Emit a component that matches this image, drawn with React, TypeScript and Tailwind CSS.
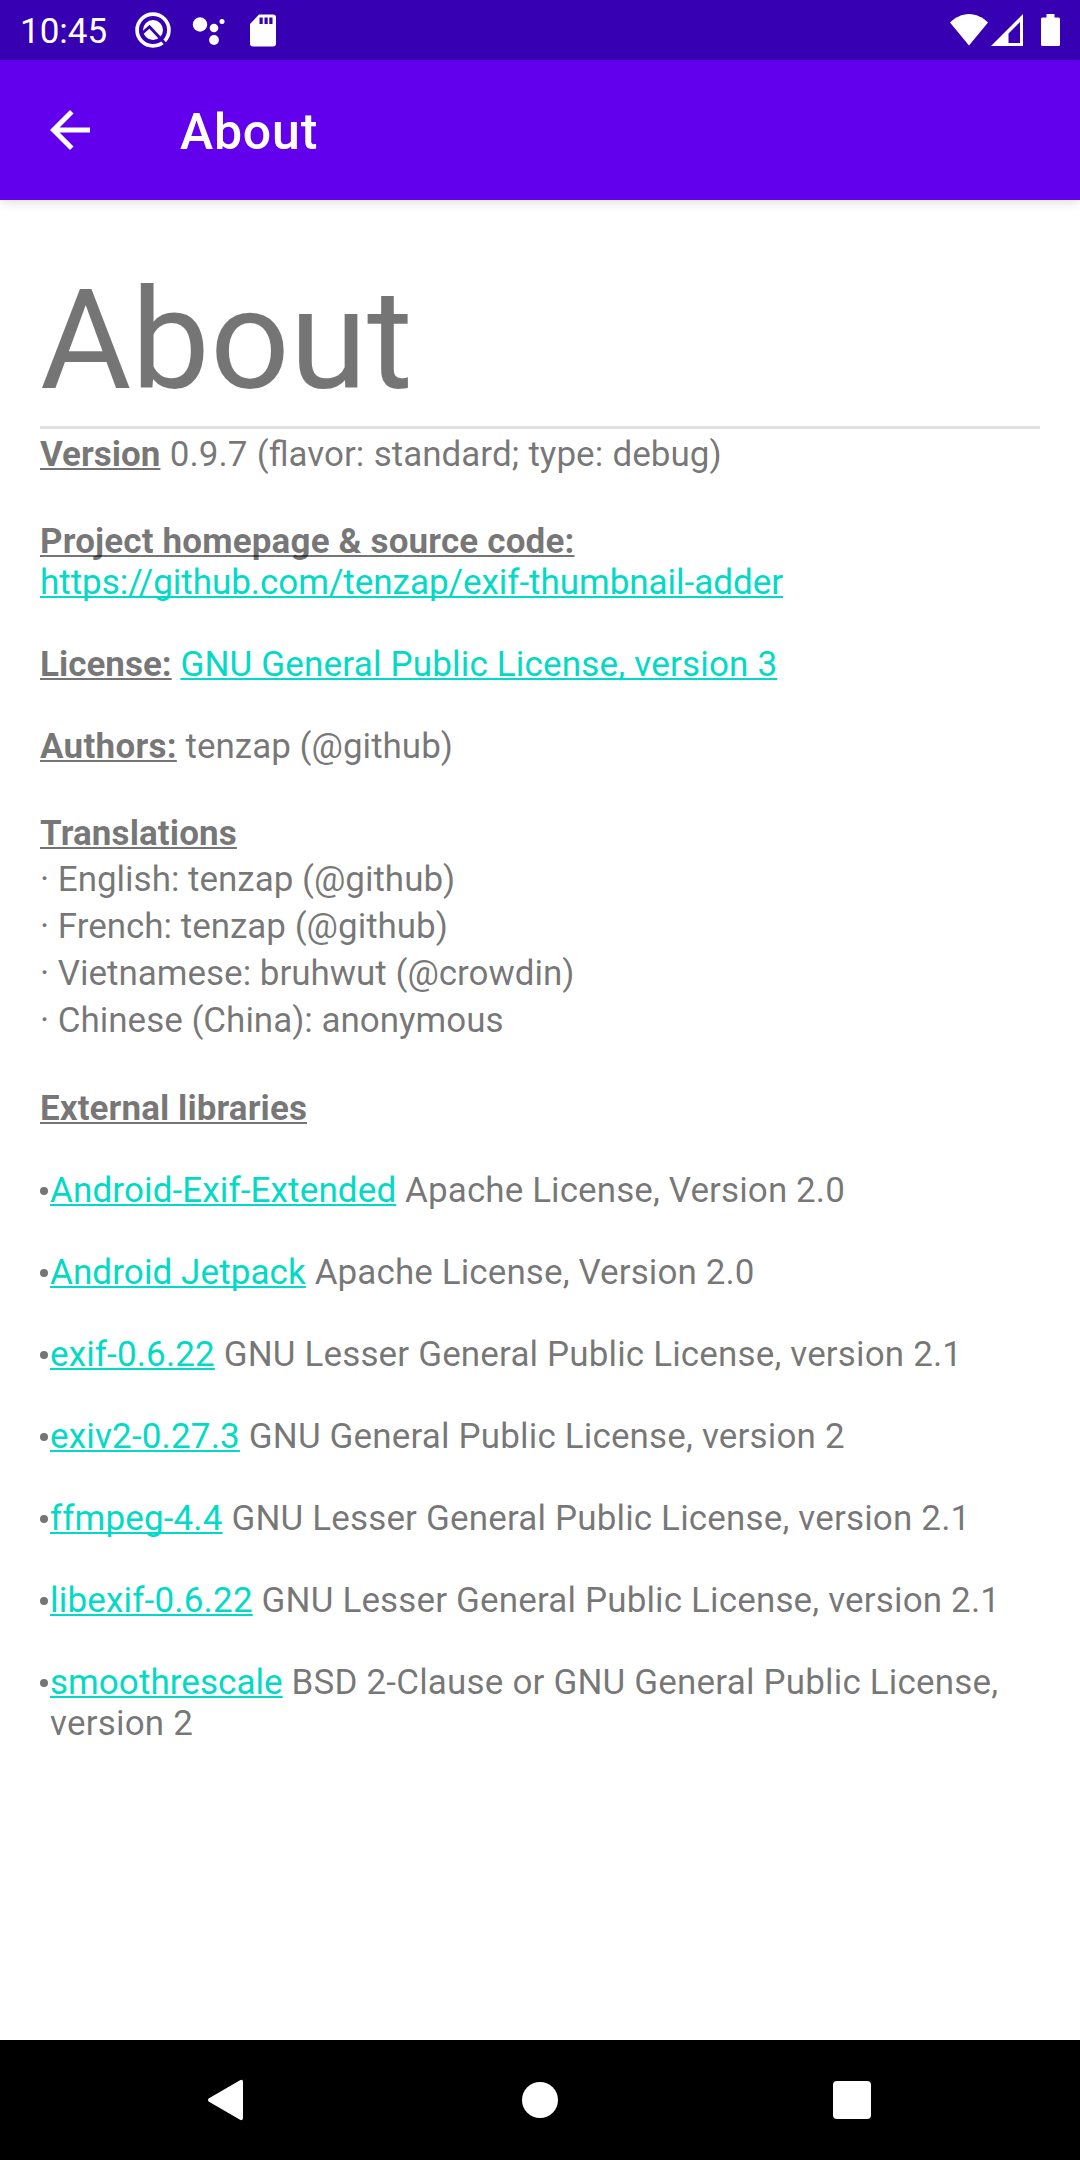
import React from "react";

const LIBRARIES = [
  { name: "Android-Exif-Extended", license: "Apache License, Version 2.0", nameTracking: "tracking-[0.13px]", tracking: "tracking-[0.1px]" },
  { name: "Android Jetpack", license: "Apache License, Version 2.0", nameTracking: "tracking-[0.1px]", tracking: "tracking-[0.1px]" },
  { name: "exif-0.6.22", license: "GNU Lesser General Public License, version 2.1", nameTracking: "tracking-[0.13px]", tracking: "tracking-[0.15px]" },
  { name: "exiv2-0.27.3", license: "GNU General Public License, version 2", nameTracking: "tracking-[0.17px]", tracking: "tracking-[0.16px]" },
  { name: "ffmpeg-4.4", license: "GNU Lesser General Public License, version 2.1", nameTracking: "tracking-[0.14px]", tracking: "tracking-[0.16px]" },
  { name: "libexif-0.6.22", license: "GNU Lesser General Public License, version 2.1", nameTracking: "tracking-[0.19px]", tracking: "tracking-[0.15px]" },
  { name: "smoothrescale", license: "BSD 2-Clause or GNU General Public License, version 2", nameTracking: "tracking-[0.05px]", tracking: "tracking-[0.18px]" },
];

const TRANSLATIONS = [
  "English: tenzap (@github)",
  "French: tenzap (@github)",
  "Vietnamese: bruhwut (@crowdin)",
  "Chinese (China): anonymous",
];

const UNDERLINE =
  "underline decoration-[2px] underline-offset-[2px] [text-decoration-skip-ink:none]";

type TextProps = { children: React.ReactNode; className?: string };

function Label({ children, className = "" }: TextProps) {
  return <strong className={`font-bold ${UNDERLINE} ${className}`}>{children}</strong>;
}

function Link({ children, className = "" }: TextProps) {
  return (
    <a href="#" className={`text-[#03dac5] ${UNDERLINE} ${className}`}>
      {children}
    </a>
  );
}

function StatusBar() {
  return (
    <div className="flex h-[60px] shrink-0 items-center justify-between bg-[#3700b3] text-white">
      <div className="flex items-center">
        <span className="ml-5 w-[88px] pt-[2px] text-[35px] leading-[41px]">10:45</span>
        <svg className="ml-[26px]" width="38" height="38" viewBox="0 0 38 38" fill="none">
          <circle cx="19" cy="19" r="15.9" stroke="#fff" strokeWidth="3.700" />
          <circle cx="19" cy="19" r="10" fill="#fff" />
          <path d="M8 22.500L15.500 15.700L32.500 34" stroke="#3700b3" strokeWidth="2.800" />
        </svg>
        <svg className="ml-[20px]" width="34" height="30" viewBox="0 0 34 30" fill="#fff">
          <circle cx="8" cy="9.500" r="7.200" />
          <circle cx="22" cy="13" r="4.300" />
          <circle cx="22" cy="25" r="4.900" />
          <circle cx="30" cy="6.500" r="2.500" />
        </svg>
        <svg className="ml-[24px]" width="26" height="33" viewBox="0 0 26 33">
          <path d="M9 0.500h14a3 3 0 0 1 3 3v26a3 3 0 0 1-3 3H3a3 3 0 0 1-3-3V10z" fill="#fff" />
          <path d="M9.500 3.500h3.200v6.500h-3.200zM14.500 3.500h3.200v6.500h-3.200zM19.300 3.500h3.200v6.500h-3.200z" fill="#3700b3" />
        </svg>
      </div>
      <div className="mr-[20px] flex items-center">
        <svg width="38" height="32" viewBox="0 0 38 32" fill="#fff">
          <path d="M19 31.500L0 8.500C5 3.500 12 0 19 0s14 3.500 19 8.500z" />
        </svg>
        <svg className="ml-[3px]" width="32" height="32" viewBox="0 0 32 32" fill="#fff">
          <path fillRule="evenodd" d="M32 0v32H0zM29 8L17.500 19.500V29H29z" />
        </svg>
        <svg className="ml-[18px]" width="19" height="32" viewBox="0 0 19 32" fill="#fff">
          <path d="M5.500 0h8v3.500H17.500A1.500 1.500 0 0 1 19 5v25.500a1.500 1.500 0 0 1-1.500 1.500h-16A1.500 1.500 0 0 1 0 30.500V5a1.500 1.500 0 0 1 1.500-1.500h4z" />
        </svg>
      </div>
    </div>
  );
}

function AppBar() {
  return (
    <header className="relative z-10 flex h-[140px] shrink-0 items-center bg-[#6200ee] text-white shadow-[0_3px_10px_rgba(0,0,0,0.12)]">
      <svg className="ml-[40px]" width="60" height="60" viewBox="0 0 24 24" fill="#fff">
        <path d="M20 11H7.830l5.590-5.590L12 4l-8 8 8 8 1.410-1.410L7.830 13H20v-2z" />
      </svg>
      <h1 className="ml-[80px] pt-[5px] text-[50px] leading-[59px] font-medium tracking-[0.8px]">About</h1>
    </header>
  );
}

function NavigationBar() {
  return (
    <nav className="flex h-[120px] shrink-0 items-center bg-black pl-[207px]">
      <svg width="37" height="42" viewBox="0 0 37 42" fill="#fff">
        <path d="M1.600 19.500L33 1.200Q36 0 36 3v36q0 3-3 1.800L1.600 22.500q-1.500-1.500 0-3z" />
      </svg>
      <span className="ml-[278px] size-[36px] rounded-full bg-white" />
      <span className="ml-[275px] size-[38px] rounded-[4px] bg-white" />
    </nav>
  );
}

export default function App() {
  return (
    <div className="flex h-[2160px] w-[1080px] flex-col overflow-hidden bg-white font-['Roboto',sans-serif]">
      <StatusBar />
      <AppBar />
      <main className="flex-1 px-[40px] pt-[58px] text-[35px] leading-[41px] text-black/54">
        <h2 className="text-[140px] leading-[164px]">About</h2>
        <hr className="mt-[4px] h-[3px] border-0 bg-[#e0e0e0]" />
        <p className="mt-[5px] [word-spacing:0.7px]">
          <Label>Version</Label> 0.9.7 (flavor: standard; type: debug)
        </p>
        <p className="mt-[46px]">
          <Label className="tracking-[0.15px]">Project homepage &amp; source code:</Label>
          <br />
          <Link className="tracking-[-0.03px]">https://github.com/tenzap/exif-thumbnail-adder</Link>
        </p>
        <p className="mt-[41px]">
          <Label>License:</Label>{" "}
          <Link className="tracking-[0.185px]">GNU General Public License, version 3</Link>
        </p>
        <p className="mt-[41px]">
          <Label className="tracking-[0.25px]">Authors:</Label> tenzap (@github)
        </p>
        <h3 className="mt-[46px]">
          <Label className="tracking-[0.11px]">Translations</Label>
        </h3>
        <ul className="mt-[2px] leading-[47px] tracking-[-0.02px]">
          {TRANSLATIONS.map((entry) => (
            <li key={entry}>· {entry}</li>
          ))}
        </ul>
        <h3 className="mt-[44px]">
          <Label className="tracking-[0.08px]">External libraries</Label>
        </h3>
        <ul className="mt-[41px] flex flex-col gap-[41px]">
          {LIBRARIES.map((lib) => (
            <li key={lib.name} className="flex">
              <span className="flex h-[41px] w-[10px] shrink-0 items-center">
                <span className="size-[8px] rounded-full bg-[#757575]" />
              </span>
              <span className={lib.tracking}>
                <Link className={lib.nameTracking}>{lib.name}</Link> {lib.license}
              </span>
            </li>
          ))}
        </ul>
      </main>
      <NavigationBar />
    </div>
  );
}
